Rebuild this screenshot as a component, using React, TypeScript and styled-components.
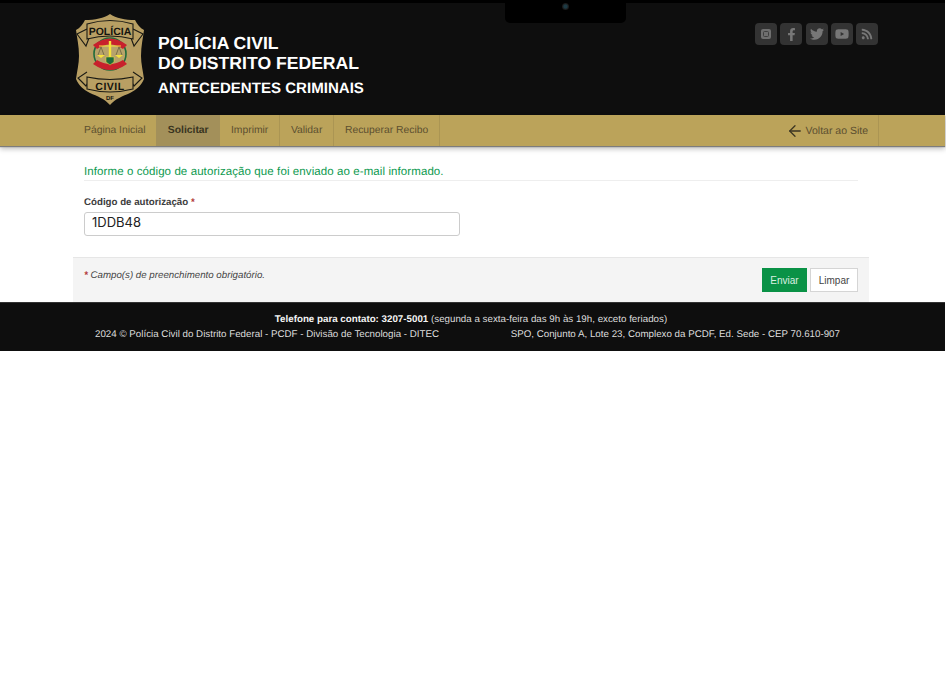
import React from "react";
import styled, { createGlobalStyle } from "styled-components";
import { ArrowLeft } from "lucide-react";
import { FaFacebookF, FaTwitter, FaYoutube, FaRss } from "react-icons/fa";

const Global = createGlobalStyle`
  html, body { margin: 0; padding: 0; background: #fff; }
  body { font-family: "Liberation Sans", Arial, sans-serif; text-rendering: geometricPrecision; }
`;

const Page = styled.div`
  width: 945px;
  position: relative;
`;
const Header = styled.header`
  height: 112px;
  background: #0e0e0e;
  border-top: 3px solid #000;
  padding-left: 75px;
  padding-right: 67px;
  display: flex;
  justify-content: space-between;
  align-items: flex-start;
`;
const Brand = styled.div`
  display: flex;
  align-items: flex-start;
  padding-top: 11px;
`;
const TitleBox = styled.div`
  margin-left: 13px;
  margin-top: 19px;
  color: #fff;
  font-family: "Liberation Sans", Arial, sans-serif;
  font-weight: 700;
`;
const TitleLine = styled.div`
  font-size: 17.6px;
  line-height: 20px;
`;
const SubTitle = styled.div`
  font-size: 15.07px;
  line-height: 18px;
  margin-top: 7px;
`;
const Socials = styled.div`
  display: flex;
  gap: 3.25px;
  padding-top: 20px;
`;
const Social = styled.a`
  width: 22px;
  height: 22px;
  border-radius: 4px;
  background: #333;
  color: #777;
  display: flex;
  align-items: center;
  justify-content: center;
`;
const Notch = styled.div`
  position: absolute;
  left: 505px;
  top: 3px;
  width: 121px;
  height: 20px;
  background: #000;
  border-radius: 0 0 5px 5px;
`;
const Camera = styled.div`
  position: absolute;
  left: 57px;
  top: 0;
  width: 7px;
  height: 7px;
  border-radius: 50%;
  background: radial-gradient(circle, #1d3a44 0 30%, #1c1c1c 60%, #0a0a0a 100%);
`;
const Nav = styled.nav`
  height: 31px;
  background: #bba35a;
  padding: 0 66px 0 73.2px;
  display: flex;
  justify-content: space-between;
  box-shadow: 0 1px 1px #7d7d7d, 0 3px 5px rgba(0, 0, 0, 0.25);
  position: relative;
`;
const NavGroup = styled.div`
  display: flex;
`;
const NavItem = styled.a<{ $active?: boolean; $plain?: boolean }>`
  display: flex;
  align-items: center;
  padding: 0 ${p => (p.$active ? "11.5px" : "10.8px")};
  font-size: 10.35px;
  color: ${p => (p.$active ? "#38341f" : "#5b4f30")};
  font-weight: ${p => (p.$active ? 700 : 400)};
  background: ${p => (p.$active ? "#a3905a" : "transparent")};
  border-right: ${p => (p.$plain ? "none" : "1px solid #ab9553")};
`;
const BackLink = styled.a`
  display: flex;
  align-items: center;
  gap: 2px;
  padding: 0 10px 0 0;
  font-size: 10.5px;
  color: #5b4f30;
  border-right: 1px solid #ab9553;
  svg { color: #3b3522; }
`;
const Main = styled.main`
  margin: 0 76px 0 73px;
`;
const Form = styled.div`
  padding: 17px 11px 21px 11px;
`;
const Message = styled.div`
  color: #0e9a50;
  font-size: 11.5px;
  line-height: 19px;
  letter-spacing: 0.09px;
  border-bottom: 1px solid #eee;
  height: 17px;
`;
const Label = styled.label`
  display: block;
  margin-top: 16px;
  font-size: 9.72px;
  line-height: 12px;
  font-weight: 700;
  color: #3d3d3d;
`;
const Req = styled.span`
  color: #b23a3a;
  font-weight: 700;
`;
const Input = styled.input`
  display: block;
  box-sizing: border-box;
  width: 376px;
  height: 24px;
  margin-top: 3px;
  padding: 0 7px 5px;
  border: 1px solid #ccc;
  border-radius: 3px;
  font-family: Inter, "Liberation Sans", sans-serif;
  font-size: 13px;
  color: #222;
  outline: none;
`;
const FormFooter = styled.div`
  box-sizing: border-box;
  height: 45px;
  background: #f4f4f4;
  border-top: 1px solid #e6e6e6;
  padding: 10px 11px 0;
  display: flex;
  justify-content: space-between;
`;
const Note = styled.div`
  font-size: 9.72px;
  line-height: 12px;
  font-style: italic;
  color: #444;
  padding-top: 2px;
`;
const Buttons = styled.div`
  display: flex;
  gap: 3px;
`;
const Button = styled.button<{ $primary?: boolean }>`
  box-sizing: border-box;
  height: 24px;
  margin: 0;
  padding: 0;
  width: ${p => (p.$primary ? "45px" : "48px")};
  font-family: "Liberation Sans", Arial, sans-serif;
  font-size: 10px;
  border: 1px solid ${p => (p.$primary ? "#0a9246" : "#d5d5d5")};
  background: ${p => (p.$primary ? "#0a9246" : "#fff")};
  color: ${p => (p.$primary ? "#dcefe2" : "#444")};
`;
const Footer = styled.footer`
  box-sizing: border-box;
  height: 49px;
  background: #0e0e0e;
  border-top: 1px solid #333;
  color: #ddd;
  font-size: 9.78px;
  line-height: 13px;
  padding-top: 10px;
`;
const FooterCenter = styled.div`
  text-align: center;
  width: 942px;
  strong { color: #f4f4f4; }
`;
const FooterRow = styled.div`
  display: flex;
  justify-content: space-between;
  padding: 2px 105px 0 95px;
`;

const Badge = () => (
  <svg width="70" height="91" viewBox="0 0 70 91">
    <path d="M35 0 C29 4 20 6 10 6 C8 10 5 14 1 16 C2 24 4 32 4 42 C4 50 2 57 1 65 C4 72 9 76 15 79 C22 82 30 85 35 91 C40 85 48 82 55 79 C61 76 66 72 69 65 C68 57 66 50 66 42 C66 32 68 24 69 16 C65 14 62 10 60 6 C50 6 41 4 35 0 Z" fill="#b89f63" />
    <path d="M12 15 L2 20 L11 32 L14 24 M58 15 L68 20 L59 32 L56 24" fill="none" stroke="#1a1a14" strokeWidth="1.1" />
    <path d="M12 10 Q35 3 58 10 L58 25 Q35 19 12 25 Z" fill="#b89f63" stroke="#1a1a14" strokeWidth="1.1" />
    <text x="35" y="20.5" textAnchor="middle" fontFamily="'Liberation Sans', sans-serif" fontWeight="700" fontSize="10.5" fill="#14130e">POLÍCIA</text>
    <path d="M12 58 L3 64 L11 72 L14 67 M58 58 L67 64 L59 72 L56 67" fill="none" stroke="#1a1a14" strokeWidth="1.1" />
    <path d="M12 63 Q35 68 58 63 L58 75 Q35 81 12 75 Z" fill="#b89f63" stroke="#1a1a14" strokeWidth="1.1" />
    <text x="35" y="75.5" textAnchor="middle" fontFamily="'Liberation Sans', sans-serif" fontWeight="700" fontSize="10.5" letterSpacing="0.5" fill="#14130e">CIVIL</text>
    <text x="35" y="86" textAnchor="middle" fontFamily="'Liberation Sans', sans-serif" fontWeight="700" fontSize="6" fill="#14130e">DF</text>
    <circle cx="35" cy="40" r="16" fill="#b7a36a" stroke="#1f6b3c" strokeWidth="1.6" />
    <path d="M18 31 Q35 18 52 31 L48 35 Q35 26 22 35 Z" fill="#c8202c" />
    <path d="M18 50 Q35 62 52 50 L48 46 Q35 54 22 46 Z" fill="#c8202c" />
    <rect x="33.8" y="27" width="2.4" height="16" fill="#f5e23a" />
    <path d="M24 32 H46" stroke="#f5e23a" strokeWidth="1" />
    <path d="M23 41 L26 33 L29 41 M41 41 L44 33 L47 41" fill="none" stroke="#3a3a24" strokeWidth="0.5" />
    <path d="M22 41 H30 L26 44 Z M40 41 H48 L44 44 Z" fill="#f5e23a" />
    <path d="M31 43 H39 V48 L35 51 L31 48 Z" fill="#1f6b3c" stroke="#f5e23a" strokeWidth="0.5" />
  </svg>
);

const SquareGlyph = () => (
  <svg width="10" height="10" viewBox="0 0 10 10">
    <rect width="10" height="10" rx="2" fill="#6f6f6f" />
    <rect x="2.5" y="2.5" width="5" height="5" rx="1" fill="none" stroke="#3f3f3f" strokeWidth="1" />
  </svg>
);

export default function App() {
  return (
    <Page>
      <Global />
      <Header>
        <Brand>
          <Badge />
          <TitleBox>
            <TitleLine>POLÍCIA CIVIL</TitleLine>
            <TitleLine>DO DISTRITO FEDERAL</TitleLine>
            <SubTitle>ANTECEDENTES CRIMINAIS</SubTitle>
          </TitleBox>
        </Brand>
        <Socials>
          <Social><SquareGlyph /></Social>
          <Social><FaFacebookF size={13} /></Social>
          <Social><FaTwitter size={14} /></Social>
          <Social><FaYoutube size={14} /></Social>
          <Social><FaRss size={12} /></Social>
        </Socials>
      </Header>
      <Notch><Camera /></Notch>
      <Nav>
        <NavGroup>
          <NavItem $plain>Página Inicial</NavItem>
          <NavItem $active $plain>Solicitar</NavItem>
          <NavItem>Imprimir</NavItem>
          <NavItem>Validar</NavItem>
          <NavItem>Recuperar Recibo</NavItem>
        </NavGroup>
        <BackLink><ArrowLeft size={18} strokeWidth={1.7} />Voltar ao Site</BackLink>
      </Nav>
      <Main>
        <Form>
          <Message>Informe o código de autorização que foi enviado ao e-mail informado.</Message>
          <Label>Código de autorização <Req>*</Req></Label>
          <Input defaultValue="1DDB48" />
        </Form>
        <FormFooter>
          <Note><Req>*</Req> Campo(s) de preenchimento obrigatório.</Note>
          <Buttons>
            <Button $primary>Enviar</Button>
            <Button>Limpar</Button>
          </Buttons>
        </FormFooter>
      </Main>
      <Footer>
        <FooterCenter><strong>Telefone para contato: 3207-5001</strong> (segunda a sexta-feira das 9h às 19h, exceto feriados)</FooterCenter>
        <FooterRow>
          <span>2024 © Polícia Civil do Distrito Federal - PCDF - Divisão de Tecnologia - DITEC</span>
          <span>SPO, Conjunto A, Lote 23, Complexo da PCDF, Ed. Sede - CEP 70.610-907</span>
        </FooterRow>
      </Footer>
    </Page>
  );
}
